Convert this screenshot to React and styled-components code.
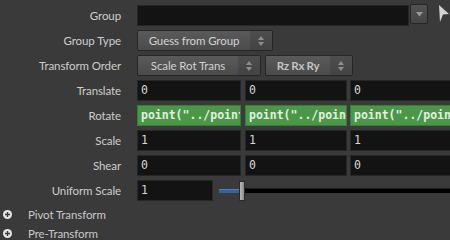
import React from 'react';
import styled, { createGlobalStyle } from 'styled-components';

const Global = createGlobalStyle`
  html, body {
    margin: 0;
    padding: 0;
    background: #3a3a3a;
    overflow: hidden;
  }
`;

const Panel = styled.div`
  width: 450px;
  height: 240px;
  background: #3a3a3a;
  padding-top: 5px;
  box-sizing: border-box;
  font-family: Lato, "Noto Sans", sans-serif;
  font-size: 11.5px;
  letter-spacing: -0.1px;
  color: #cdcdcd;
  overflow: hidden;
`;

const Row = styled.div`
  display: flex;
  align-items: center;
  height: 21px;
  margin-bottom: 4px;
  margin-top: ${p => p.$push || 0}px;
  white-space: nowrap;
`;

const Label = styled.div`
  width: 121px;
  padding-right: 16px;
  text-align: right;
  flex: none;
`;

const Field = styled.div`
  width: ${p => p.$w}px;
  height: 21px;
  margin-right: ${p => p.$gap || 0}px;
  box-sizing: border-box;
  flex: none;
  background: ${p => (p.$expr ? '#4b9748' : '#131313')};
  border: 1px solid ${p => (p.$expr ? '#3c7a3a' : '#262626')};
  font-family: "DejaVu Sans Mono", monospace;
  font-size: 11.5px;
  letter-spacing: 0;
  font-weight: ${p => (p.$expr ? 'bold' : 'normal')};
  color: ${p => (p.$expr ? '#e4eee2' : '#d8d8d8')};
  line-height: 19px;
  padding-left: 3px;
  overflow: hidden;
`;

const Menu = styled.div`
  display: flex;
  width: ${p => p.$w}px;
  height: 21px;
  margin-right: ${p => p.$gap || 0}px;
  box-sizing: border-box;
  flex: none;
  border: 1px solid #262626;
  border-radius: 2px;
  background: linear-gradient(#5a5a5a, #4b4b4b);
  overflow: hidden;
`;

const MenuText = styled.div`
  flex: 1;
  text-align: center;
  line-height: 19px;
  color: ${p => (p.$bold ? '#c4c4c4' : '#d2d2d2')};
  font-weight: ${p => (p.$bold ? 'bold' : 'normal')};
  letter-spacing: ${p => (p.$bold ? '-0.3px' : '-0.1px')};
`;

const Spin = styled.div`
  width: 22px;
  flex: none;
  background: linear-gradient(#4e4e4e, #434343);
  display: flex;
  align-items: center;
  justify-content: center;
`;

const ArrowButton = styled.div`
  width: 18px;
  height: 20px;
  margin-left: 1px;
  flex: none;
  box-sizing: border-box;
  border: 1px solid #262626;
  border-radius: 2px;
  background: linear-gradient(#525252, #454545);
  display: flex;
  align-items: center;
  justify-content: center;
  align-self: flex-start;
  margin-top: -1px;
`;

const Jump = styled.div`
  margin-left: 10px;
  display: flex;
  align-self: flex-start;
  margin-top: -1px;
`;

const Slider = styled.div`
  flex: 1;
  height: 21px;
  margin-left: 6px;
  display: flex;
  align-items: center;
`;

const Filled = styled.div`
  width: 20px;
  height: 3px;
  background: #2e63a8;
  border-top: 1px solid #4d7fc0;
  flex: none;
`;

const Track = styled.div`
  flex: 1;
  height: 4px;
  background: #000;
  border-top: 1px solid #1c1c1c;
`;

const Handle = styled.div`
  width: 6px;
  height: 20px;
  flex: none;
  box-sizing: border-box;
  background: linear-gradient(90deg, #b8b8b8, #8c8c8c);
  border: 1px solid #2a2a2a;
`;

const Folder = styled.div`
  display: flex;
  align-items: center;
  height: 19px;
  padding-left: 3px;
  color: #c8c8c8;
`;

const FolderText = styled.span`
  margin-left: 16px;
`;

const SpinArrows = () => (
  <svg width="8" height="12" viewBox="0 0 8 12">
    <path d="M4 1 L7 5 L1 5 Z" fill="#8e8e8e" />
    <path d="M4 11 L7 7 L1 7 Z" fill="#8e8e8e" />
  </svg>
);

const Plus = () => (
  <svg width="9" height="9" viewBox="0 0 9 9">
    <circle cx="4.5" cy="4.5" r="4.5" fill="#e6e6e6" />
    <path d="M2 4.5 H7 M4.5 2 V7" stroke="#3a3a3a" strokeWidth="1.4" />
  </svg>
);

const vec = ['Translate', 'Rotate', 'Scale', 'Shear'];
const values = { Translate: '0', Rotate: 'point("../point', Scale: '1', Shear: '0' };

export default function App() {
  return (
    <Panel>
      <Global />
      <Row>
        <Label>Group</Label>
        <Field $w={272} />
        <ArrowButton>
          <svg width="7" height="5" viewBox="0 0 7 5">
            <path d="M0 0 H7 L3.5 4.5 Z" fill="#9a9a9a" />
          </svg>
        </ArrowButton>
        <Jump>
          <svg width="12" height="19" viewBox="0 0 12 19">
            <path d="M1 1 L11 10 L5 10.5 L2 18 Z" fill="#d4d4d4" />
          </svg>
        </Jump>
      </Row>
      <Row>
        <Label>Group Type</Label>
        <Menu $w={136}>
          <MenuText>Guess from Group</MenuText>
          <Spin><SpinArrows /></Spin>
        </Menu>
      </Row>
      <Row>
        <Label>Transform Order</Label>
        <Menu $w={124} $gap={4}>
          <MenuText>Scale Rot Trans</MenuText>
          <Spin><SpinArrows /></Spin>
        </Menu>
        <Menu $w={88}>
          <MenuText $bold>Rz Rx Ry</MenuText>
          <Spin><SpinArrows /></Spin>
        </Menu>
      </Row>
      {vec.map((name, i) => (
        <Row key={name} $push={i === 0 ? 2 : 0}>
          <Label>{name}</Label>
          <Field $w={104} $gap={4} $expr={name === 'Rotate'}>{values[name]}</Field>
          <Field $w={102} $gap={3} $expr={name === 'Rotate'}>{values[name]}</Field>
          <Field $w={104} $expr={name === 'Rotate'}>{values[name]}</Field>
        </Row>
      ))}
      <Row>
        <Label>Uniform Scale</Label>
        <Field $w={76}>1</Field>
        <Slider>
          <Filled />
          <Handle />
          <Track />
        </Slider>
      </Row>
      <Folder>
        <Plus />
        <FolderText>Pivot Transform</FolderText>
      </Folder>
      <Folder>
        <Plus />
        <FolderText>Pre-Transform</FolderText>
      </Folder>
    </Panel>
  );
}
